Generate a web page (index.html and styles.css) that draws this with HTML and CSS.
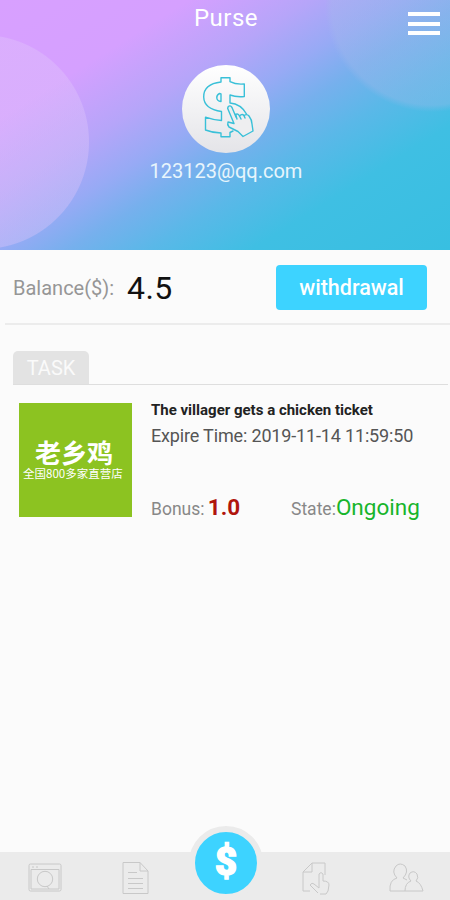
FILE: index.html
```html
<!DOCTYPE html>
<html lang="en">
<head>
<meta charset="utf-8">
<title>Purse</title>
<link rel="stylesheet" href="styles.css">
</head>
<body>
<div class="app">
  <header class="hero">
    <h1 class="title">Purse</h1>
    <div class="menu"><span></span><span></span><span></span></div>
    <svg class="avatar" viewBox="182 65 88 88">
      <defs><linearGradient id="disc" x1="0" y1="0" x2="0" y2="1"><stop offset="0" stop-color="#fff"/><stop offset="1" stop-color="#e4e4e8"/></linearGradient></defs>
      <circle cx="226" cy="109" r="44" fill="url(#disc)"/>
      <g fill="none" stroke="#39c0d8" stroke-width="1.4" stroke-linejoin="round" stroke-linecap="round">
        <path d="M221 82V77.7H230V81.7Q236 84.8 244.3 84V96.5Q236 97.3 230 95V103Q241 104 246.5 114M221 82Q203.5 84 203.7 97Q204 109 221.5 111.5V120.5Q213 120 205.5 117.2V130Q213 133 221 133V136.8H230V132.5L233 131M219.5 93.5Q216.5 95 216.8 98Q217 101 221 101.5V94Z"/>
        <path fill="#eeeef0" d="M228 107Q230 104.5 232 107.5L236 117L235.5 114.5Q238 113 239.5 116Q242 113.5 244 115.5Q247 113.5 249 116Q252 120 252 124L253 131L243 136.5L238 131.5L229 127Q227 124.5 228 122L234 123.5L227.7 108.5Z"/>
        <path d="M235.5 114.5L237 119M239.5 116L241 119M244 115.5L245 118"/>
      </g>
    </svg>
    <div class="email">123123@qq.com</div>
  </header>

  <section class="balance">
    <span class="balance-label">Balance($):</span>
    <span class="balance-value">4.5</span>
    <button class="withdraw">withdrawal</button>
  </section>

  <main class="tasks">
    <div class="tabs"><span class="tab">TASK</span></div>
    <article class="task">
      <div class="brand">
        <div class="brand-name" lang="zh">老乡鸡</div>
        <div class="brand-sub" lang="zh">全国800多家直营店</div>
      </div>
      <div class="info">
        <div class="task-title">The villager gets a chicken ticket</div>
        <div class="expire">Expire Time: 2019-11-14 11:59:50</div>
        <div class="facts">
          <div class="bonus">Bonus: <b>1.0</b></div>
          <div class="state">State:<span>Ongoing</span></div>
        </div>
      </div>
    </article>
  </main>

  <nav class="nav">
    <svg class="icon" viewBox="0 0 36 36"><rect x="2" y="4" width="32" height="27" rx="1.5"/><path d="M4 9.5H32M5 7H7M9 7H11M32 9.5V29H4V9.5"/><circle cx="18" cy="19" r="7.7"/><path d="M20 26L22 29"/></svg>
    <svg class="icon" viewBox="0 0 36 36"><path d="M6 2.5H23L31 11V33.5H6ZM23 2.5V11H31M11 12.5H20M11 18.5H26M11 23.5H26M11 28.5H26"/></svg>
    <div class="purse">$</div>
    <svg class="icon" viewBox="0 0 36 36"><path d="M12 31H5V12L14 3H27V15M14 3V12H5M12 25L20 33M12 25Q14 22 16 24L21 28V14Q23 11 25 14V21Q31 21 31 25L30 31L28 34H22"/></svg>
    <svg class="icon" viewBox="0 0 36 36"><path d="M17 31H2Q1 20 9 18Q3 12 8 6Q12 2 17 6Q21 12 15 18L19 20M17 31Q17 23 23 21Q19 17 22 13Q26 10 29 14Q31 18 28 21Q33 23 35 31Z"/></svg>
  </nav>
</div>
</body>
</html>
```

FILE: styles.css
```css
* { box-sizing: border-box; }
body { margin: 0; font-family: Roboto, "Noto Sans CJK SC", sans-serif; background: #fbfbfb; }
.app { width: 450px; height: 900px; display: flex; flex-direction: column; overflow: hidden; }

.hero {
  position: relative;
  height: 250px;
  padding-left: 2px;
  display: flex;
  flex-direction: column;
  align-items: center;
  background:
    radial-gradient(circle at -18px 142px, rgba(225, 200, 250, .36) 106.5px, transparent 107.5px),
    radial-gradient(circle at 432px 5px, rgba(165, 185, 235, .35) 100px, transparent 107px),
    linear-gradient(148deg, #d8a0ff 0, #d5a0ff 100px, #b6a5f9 165px, #97aaf5 210px, #76b0ed 248px, #5ab8e8 290px, #3fbfe3 345px, #38bfe1 100%);
}
.title { margin: 4px 0 0; height: 28px; line-height: 28px; font-size: 24px; font-weight: 400; letter-spacing: .5px; color: #fff; }
.menu { position: absolute; top: 12px; right: 10px; width: 32px; display: grid; gap: 5.5px; }
.menu span { height: 4px; background: #fff; }
.avatar { width: 88px; height: 88px; margin-top: 33px; }
.email { margin-top: 6px; line-height: 24px; font-size: 20px; color: #e8f5fc; }

.balance { height: 75px; margin-left: 5px; padding: 2px 23px 0 8px; display: flex; align-items: center; border-bottom: 2px solid #ececec; }
.balance-label { width: 114px; font-size: 20px; color: #969696; }
.balance-value { font-size: 32px; letter-spacing: .4px; color: #111; }
.withdraw { margin-left: auto; width: 151px; height: 45px; padding: 0; border: 0; border-radius: 4px; background: #3dd3ff; font: 500 21.5px Roboto, sans-serif; color: #fff; }

.tasks { flex: 1; padding: 26px 2px 0 13px; }
.tabs { height: 34px; display: flex; border-bottom: 1px solid #dedede; }
.tab { width: 76px; border-radius: 5px 5px 0 0; background: #e3e3e3; color: #fafafa; font-size: 20px; line-height: 34px; text-align: center; }
.task { display: flex; gap: 19px; padding: 18px 0 0 6px; }
.brand { width: 113px; height: 114px; padding-top: 33px; background: #8cc321; color: #fff; white-space: nowrap; }
.brand-name { padding-left: 16px; font: 700 26px/32px "Noto Sans CJK SC", sans-serif; }
.brand-sub { margin-top: -2px; padding-left: 4px; font: 400 11.5px/14px "Noto Sans CJK SC", sans-serif; }
.info { flex: 1; }
.task-title { line-height: 15px; font-size: 15px; font-weight: 700; color: #222; white-space: nowrap; }
.expire { margin-top: 6px; line-height: 24px; font-size: 18px; letter-spacing: -.16px; color: #555; white-space: nowrap; }
.facts { display: flex; margin-top: 45px; line-height: 28px; font-size: 17.5px; color: #888; white-space: nowrap; }
.bonus { width: 140px; }
.bonus b { margin-left: -1px; font-size: 22.5px; color: #b0150c; }
.state span { font-size: 22.5px; color: #17b52b; }

.nav { height: 48px; display: flex; align-items: center; padding: 0 25px 0 27px; background: #ebebeb; }
.icon { width: 36px; height: 36px; margin-top: 3px; fill: none; stroke: #c8c8c8; stroke-width: 1; stroke-linejoin: round; }
.icon:nth-child(2) { margin-left: 54px; }
.icon:nth-child(4) { margin-left: 35px; }
.icon:nth-child(5) { margin-left: 54px; }
.purse { width: 74px; height: 74px; flex: none; margin: -26px 0 0 36px; border: 6px solid #ebebeb; border-radius: 50%; background: #3dd3ff; color: #fff; font-size: 38px; font-weight: 900; -webkit-text-stroke: 1.5px #fff; line-height: 61px; text-align: center; }
```
